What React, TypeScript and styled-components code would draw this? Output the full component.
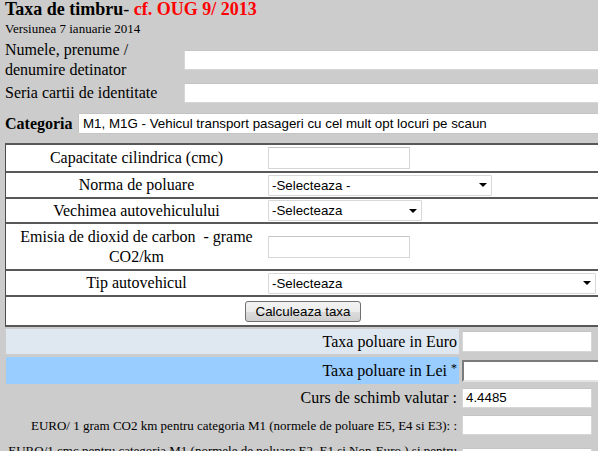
import React from "react";
import styled, { createGlobalStyle } from "styled-components";

const Global = createGlobalStyle`
  html, body {
    margin: 0;
    padding: 0;
    background: #cccccc;
    overflow: hidden;
    font-family: "Liberation Serif", "Times New Roman", serif;
    font-size: 16px;
    color: #000;
  }
  * { box-sizing: border-box; }
`;

const Page = styled.div`
  width: 640px;
  padding-left: 5px;
`;

const Title = styled.h1`
  margin: 0;
  font-size: 18px;
  line-height: 18px;
  height: 18px;
  font-weight: normal;
  white-space: nowrap;
`;

const Bold = styled.b`
  font-weight: bold;
`;

const Red = styled.b`
  font-weight: bold;
  color: #ff0000;
`;

const Version = styled.div`
  margin-top: 2px;
  font-size: 13px;
  line-height: 17px;
`;

const IdGrid = styled.div`
  margin-top: 3px;
  display: grid;
  grid-template-columns: 179px 1fr;
  row-gap: 3px;
  align-items: center;
`;

const IdLabel = styled.div`
  line-height: 20px;
`;

const TextInput = styled.input<{ $w: number; $h?: number }>`
  display: block;
  width: ${(p) => p.$w}px;
  height: ${(p) => p.$h ?? 20}px;
  margin: 0;
  padding: 0 3px;
  background: #fff;
  border: 1px solid #d6d6d6;
  border-top-color: #c2c4c8;
  border-radius: 1px;
  font-family: "Liberation Sans", Arial, sans-serif;
  font-size: 13.33px;
  color: #000;
  outline: none;
`;

const InsetInput = styled(TextInput)`
  border-width: 2px;
  border-style: solid;
  border-color: #7b7b7b #e4e4e4 #e4e4e4 #7b7b7b;
  border-radius: 0;
`;

const CategoryRow = styled.div`
  margin-top: 10px;
  height: 21px;
  display: flex;
  align-items: center;
`;

const CategoryLabel = styled.b`
  font-weight: bold;
  line-height: 21px;
  width: 73px;
  flex: none;
`;

const SelectWrap = styled.div<{ $w: number }>`
  position: relative;
  width: ${(p) => p.$w}px;
  flex: none;
  &::after {
    content: "";
    position: absolute;
    right: 5px;
    top: 50%;
    margin-top: -2px;
    border-left: 4px solid transparent;
    border-right: 4px solid transparent;
    border-top: 4px solid #000;
    pointer-events: none;
  }
`;

const Select = styled.select<{ $h?: number }>`
  display: block;
  width: 100%;
  height: ${(p) => p.$h ?? 21}px;
  margin: 0;
  padding: 0 0 0 3px;
  appearance: none;
  -webkit-appearance: none;
  background: #fff;
  border: 1px solid #d8d8d8;
  border-radius: 1px;
  font-family: "Liberation Sans", Arial, sans-serif;
  font-size: 13.33px;
  color: #000;
  outline: none;
`;

const CategorySelect = styled(Select)`
  width: 540px;
  flex: none;
  border-color: #c4c4c4;
  padding-left: 4px;
`;

const CalcTable = styled.div`
  margin-top: 9px;
  width: 600px;
  background: #fff;
  border-left: 1px solid #4d4d4d;
  border-top: 2px solid #585858;
  border-bottom: 2px solid #585858;
`;

const CalcRow = styled.div<{ $h: number }>`
  display: grid;
  grid-template-columns: 261px 1fr;
  align-items: center;
  height: ${(p) => p.$h}px;
  box-sizing: content-box;
  & + & {
    border-top: 2px solid #585858;
  }
`;

const CalcLabel = styled.div`
  text-align: center;
  line-height: 20px;
`;

const CalcField = styled.div`
  padding-left: 1px;
`;

const ButtonRow = styled.div<{ $h: number }>`
  display: flex;
  align-items: center;
  justify-content: center;
  height: ${(p) => p.$h}px;
  box-sizing: content-box;
  border-top: 2px solid #585858;
  padding-right: 5px;
`;

const Button = styled.button`
  width: 116px;
  height: 21px;
  margin: 0;
  padding: 0;
  border: 1px solid #707070;
  border-radius: 3px;
  background: linear-gradient(#f3f3f3 0%, #ebebeb 50%, #dddddd 51%, #cfcfcf 100%);
  font-family: "Liberation Sans", Arial, sans-serif;
  font-size: 13.33px;
  color: #000;
`;

const ResultGrid = styled.div`
  margin-top: 2px;
  margin-left: 1px;
  display: grid;
  grid-template-columns: 453px 1fr;
  column-gap: 3px;
  row-gap: 3px;
`;

const ResultLabel = styled.div<{ $h: number; $bg?: string; $small?: boolean }>`
  height: ${(p) => p.$h}px;
  background: ${(p) => p.$bg ?? "transparent"};
  display: flex;
  align-items: center;
  justify-content: flex-end;
  text-align: right;
  padding-right: 2px;
  font-size: ${(p) => (p.$small ? 13 : 16)}px;
  line-height: ${(p) => (p.$small ? 15 : 20)}px;
  white-space: nowrap;
`;

const ResultField = styled.div<{ $h: number }>`
  height: ${(p) => p.$h}px;
  display: flex;
  align-items: center;
`;

const Star = styled.sup`
  font-size: 12px;
  margin-left: 4px;
  position: relative;
  top: -3px;
`;

export default function App() {
  return (
    <>
      <Global />
      <Page>
        <Title>
          <Bold>Taxa de timbru</Bold>- <Red>cf. OUG 9/ 2013</Red>
        </Title>
        <Version>Versiunea 7 ianuarie 2014</Version>

        <IdGrid>
          <IdLabel>
            Numele, prenume /
            <br />
            denumire detinator
          </IdLabel>
          <TextInput $w={430} />
          <IdLabel>Seria cartii de identitate</IdLabel>
          <TextInput $w={430} />
        </IdGrid>

        <CategoryRow>
          <CategoryLabel>Categoria</CategoryLabel>
          <CategorySelect defaultValue="m1">
            <option value="m1">
              M1, M1G - Vehicul transport pasageri cu cel mult opt locuri pe scaun
            </option>
          </CategorySelect>
        </CategoryRow>

        <CalcTable>
          <CalcRow $h={26}>
            <CalcLabel>Capacitate cilindrica (cmc)</CalcLabel>
            <CalcField>
              <TextInput $w={142} $h={22} />
            </CalcField>
          </CalcRow>
          <CalcRow $h={24}>
            <CalcLabel>Norma de poluare</CalcLabel>
            <CalcField>
              <SelectWrap $w={224}>
                <Select>
                  <option>-Selecteaza -</option>
                </Select>
              </SelectWrap>
            </CalcField>
          </CalcRow>
          <CalcRow $h={23}>
            <CalcLabel>Vechimea autovehiculului</CalcLabel>
            <CalcField>
              <SelectWrap $w={154}>
                <Select>
                  <option>-Selecteaza</option>
                </Select>
              </SelectWrap>
            </CalcField>
          </CalcRow>
          <CalcRow $h={45}>
            <CalcLabel>
              Emisia de dioxid de carbon &nbsp;- grame
              <br />
              CO2/km
            </CalcLabel>
            <CalcField>
              <TextInput $w={142} $h={22} />
            </CalcField>
          </CalcRow>
          <CalcRow $h={24}>
            <CalcLabel>Tip autovehicul</CalcLabel>
            <CalcField>
              <SelectWrap $w={328}>
                <Select>
                  <option>-Selecteaza</option>
                </Select>
              </SelectWrap>
            </CalcField>
          </CalcRow>
          <ButtonRow $h={28}>
            <Button type="button">Calculeaza taxa</Button>
          </ButtonRow>
        </CalcTable>

        <ResultGrid>
          <ResultLabel $h={25} $bg="#dfe8f1">
            Taxa poluare in Euro
          </ResultLabel>
          <ResultField $h={25}>
            <TextInput $w={130} $h={21} />
          </ResultField>

          <ResultLabel $h={27} $bg="#99ccff">
            Taxa poluare in Lei<Star>*</Star>
          </ResultLabel>
          <ResultField $h={27}>
            <InsetInput $w={140} $h={22} />
          </ResultField>

          <ResultLabel $h={21}>Curs de schimb valutar :</ResultLabel>
          <ResultField $h={21}>
            <TextInput $w={130} $h={20} defaultValue="4.4485" />
          </ResultField>

          <ResultLabel $h={28} $small>
            EURO/ 1 gram CO2 km pentru categoria M1 (normele de poluare E5, E4 si E3): :
          </ResultLabel>
          <ResultField $h={28}>
            <TextInput $w={130} $h={20} />
          </ResultField>

          <ResultLabel $h={32} $small>
            <span>
              EURO/1 cmc pentru categoria M1 (normele de poluare E2, E1 si Non-Euro ) si pentru
              <br />
              categoria M1G: :
            </span>
          </ResultLabel>
          <ResultField $h={32}>
            <TextInput $w={130} $h={20} />
          </ResultField>
        </ResultGrid>
      </Page>
    </>
  );
}
